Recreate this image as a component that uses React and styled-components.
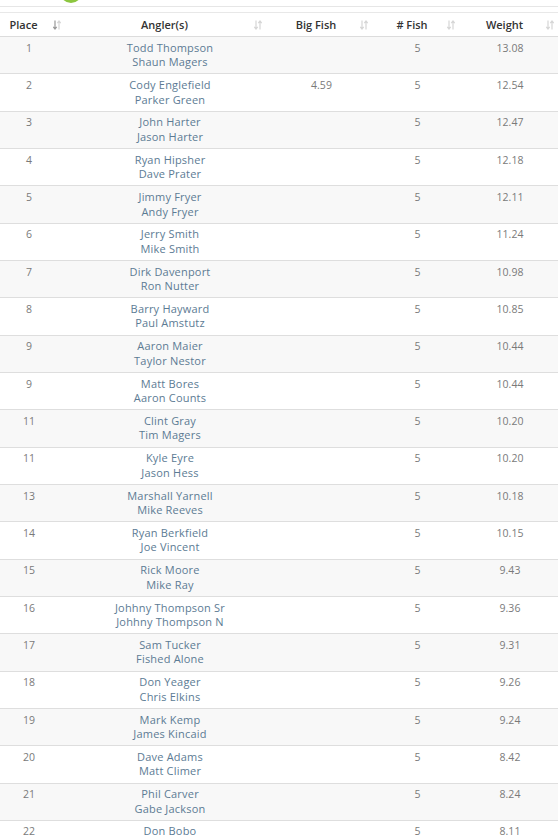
import React from "react";
import styled, { createGlobalStyle } from "styled-components";

const Global = createGlobalStyle`
  html, body { margin: 0; padding: 0; background: #fff; }
  body { font-family: "Open Sans", "Noto Sans", Arial, sans-serif; overflow: hidden; }
`;

const Page = styled.div`
  width: 558px;
  overflow: hidden;
`;

const TopStrip = styled.div`
  height: 6px;
  border-bottom: 1px solid #e6e6e6;
  overflow: hidden;
  padding-left: 60px;
`;

const Logo = styled.div`
  width: 22px;
  height: 22px;
  border-radius: 50%;
  background: #8cc63f;
  margin-top: -19px;
`;

const Table = styled.table`
  margin-top: 5px;
  margin-left: -10px;
  width: 570px;
  border-collapse: collapse;
  table-layout: fixed;
  border-top: 1px solid #e8e8e8;
`;

const Th = styled.th`
  position: relative;
  height: 23px;
  padding: 0 ${(p) => p.$pr}px 0 10px;
  font-size: 11px;
  font-weight: 600;
  color: #333;
  text-align: center;
  border-bottom: 1px solid #dcdcdc;
  white-space: nowrap;
`;

const SortIcon = styled.svg`
  position: absolute;
  top: 7px;
  right: ${(p) => p.$right}px;
`;

const Row = styled.tr`
  background: ${(p) => (p.$odd ? "#f8f8f8" : "#fff")};
  border-bottom: 1px solid #dedede;
`;

const Td = styled.td`
  padding: 3.6px ${(p) => p.$pr || 10}px 3.55px 10px;
  height: 29.2px;
  vertical-align: top;
  text-align: center;
  line-height: 14.6px;
  color: ${(p) => (p.$names ? "#5c7b94" : "#7a7a7a")};
  font-size: ${(p) => (p.$names ? "11px" : "10.5px")};
  letter-spacing: ${(p) => (p.$names ? "0.2px" : "0")};
`;

const Name = styled.div``;

function Sort({ right, active }) {
  return (
    <SortIcon $right={right} width="8" height="10" viewBox="0 0 8 10">
      <path
        d="M2 0.5 V8.5 M0.3 6.8 L2 9 L3.7 6.8"
        stroke={active ? "#999" : "#d6d6d6"}
        strokeWidth="1.2"
        fill="none"
      />
      <path
        d="M6 9.5 V1.5 M4.3 3.2 L6 1 L7.7 3.2"
        stroke="#d6d6d6"
        strokeWidth="1.2"
        fill="none"
      />
    </SortIcon>
  );
}

const rows = [
  ["1", ["Todd Thompson", "Shaun Magers"], "", "5", "13.08"],
  ["2", ["Cody Englefield", "Parker Green"], "4.59", "5", "12.54"],
  ["3", ["John Harter", "Jason Harter"], "", "5", "12.47"],
  ["4", ["Ryan Hipsher", "Dave Prater"], "", "5", "12.18"],
  ["5", ["Jimmy Fryer", "Andy Fryer"], "", "5", "12.11"],
  ["6", ["Jerry Smith", "Mike Smith"], "", "5", "11.24"],
  ["7", ["Dirk Davenport", "Ron Nutter"], "", "5", "10.98"],
  ["8", ["Barry Hayward", "Paul Amstutz"], "", "5", "10.85"],
  ["9", ["Aaron Maier", "Taylor Nestor"], "", "5", "10.44"],
  ["9", ["Matt Bores", "Aaron Counts"], "", "5", "10.44"],
  ["11", ["Clint Gray", "Tim Magers"], "", "5", "10.20"],
  ["11", ["Kyle Eyre", "Jason Hess"], "", "5", "10.20"],
  ["13", ["Marshall Yarnell", "Mike Reeves"], "", "5", "10.18"],
  ["14", ["Ryan Berkfield", "Joe Vincent"], "", "5", "10.15"],
  ["15", ["Rick Moore", "Mike Ray"], "", "5", "9.43"],
  ["16", ["Johhny Thompson Sr", "Johhny Thompson N"], "", "5", "9.36"],
  ["17", ["Sam Tucker", "Fished Alone"], "", "5", "9.31"],
  ["18", ["Don Yeager", "Chris Elkins"], "", "5", "9.26"],
  ["19", ["Mark Kemp", "James Kincaid"], "", "5", "9.24"],
  ["20", ["Dave Adams", "Matt Climer"], "", "5", "8.42"],
  ["21", ["Phil Carver", "Gabe Jackson"], "", "5", "8.24"],
  ["22", ["Don Bobo"], "", "5", "8.11"],
];

const cols = [
  { label: "Place", w: 78, r: 7, pr: 21, active: true },
  { label: "Angler(s)", w: 204, r: 10, pr: 21 },
  { label: "Big Fish", w: 99, r: 3, pr: 21 },
  { label: "# Fish", w: 93, r: 9, pr: 21 },
  { label: "Weight", w: 96, r: 6, pr: 25 },
];

export default function App() {
  return (
    <Page>
      <Global />
      <TopStrip>
        <Logo />
      </TopStrip>
      <Table>
        <colgroup>
          {cols.map((c) => (
            <col key={c.label} style={{ width: c.w }} />
          ))}
        </colgroup>
        <thead>
          <tr>
            {cols.map((c) => (
              <Th key={c.label} $pr={c.pr}>
                {c.label}
                <Sort right={c.r} active={c.active} />
              </Th>
            ))}
          </tr>
        </thead>
        <tbody>
          {rows.map((r, i) => (
            <Row key={i} $odd={i % 2 === 0}>
              <Td>{r[0]}</Td>
              <Td $names>
                {r[1].map((n) => (
                  <Name key={n}>{n}</Name>
                ))}
              </Td>
              <Td>{r[2]}</Td>
              <Td>{r[3]}</Td>
              <Td $pr={14}>{r[4]}</Td>
            </Row>
          ))}
        </tbody>
      </Table>
    </Page>
  );
}
